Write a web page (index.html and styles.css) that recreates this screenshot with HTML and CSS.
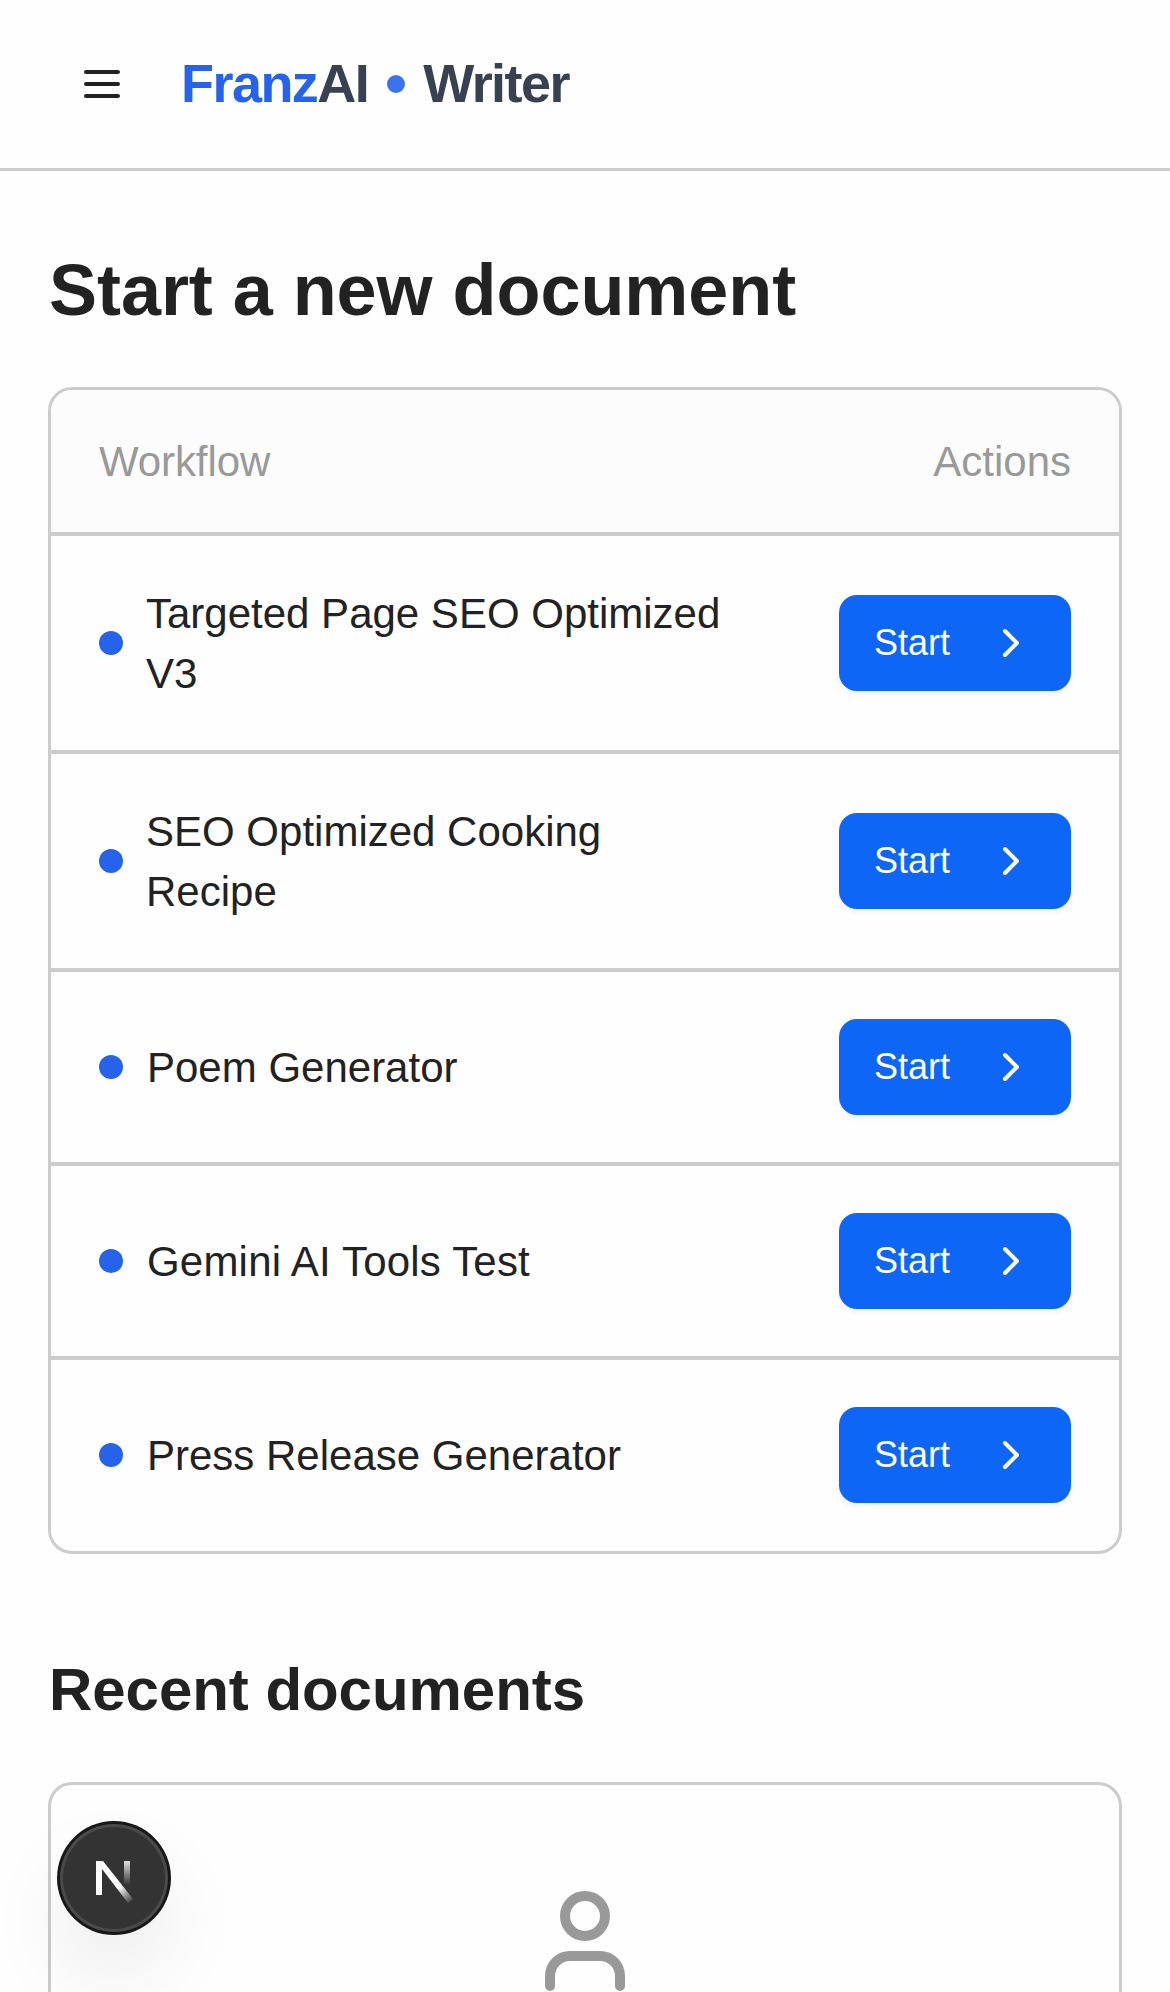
FILE: index.html
```html
<!DOCTYPE html>
<html lang="en">
<head>
<meta charset="utf-8">
<title>FranzAI Writer</title>
<link rel="stylesheet" href="styles.css">
</head>
<body>
<header class="header">
  <button class="menu" aria-label="Menu"><svg viewBox="0 0 36 28" width="36" height="28"><path d="M2 2h32M2 14h32M2 26h32"/></svg></button>
  <div class="brand"><span class="brand-name"><span class="brand-blue">Franz</span>AI</span><i class="brand-dot"></i><span class="brand-writer">Writer</span></div>
</header>
<main class="main">
  <h1 class="title">Start a new document</h1>
  <section class="table">
    <div class="thead"><span class="th-name">Workflow</span><span class="th-actions">Actions</span></div>
    <div class="row"><i class="dot"></i><span class="name name-long">Targeted Page SEO Optimized<br>V3</span><button class="start"><span class="start-label">Start</span><svg class="chevron" viewBox="0 0 24 24"><path d="m9 18 6-6-6-6"/></svg></button></div>
    <div class="row"><i class="dot"></i><span class="name name-long">SEO Optimized Cooking<br>Recipe</span><button class="start"><span class="start-label">Start</span><svg class="chevron" viewBox="0 0 24 24"><path d="m9 18 6-6-6-6"/></svg></button></div>
    <div class="row"><i class="dot"></i><span class="name">Poem Generator</span><button class="start"><span class="start-label">Start</span><svg class="chevron" viewBox="0 0 24 24"><path d="m9 18 6-6-6-6"/></svg></button></div>
    <div class="row"><i class="dot"></i><span class="name name-unkerned">Gemini AI Tools Test</span><button class="start"><span class="start-label">Start</span><svg class="chevron" viewBox="0 0 24 24"><path d="m9 18 6-6-6-6"/></svg></button></div>
    <div class="row"><i class="dot"></i><span class="name">Press Release Generator</span><button class="start"><span class="start-label">Start</span><svg class="chevron" viewBox="0 0 24 24"><path d="m9 18 6-6-6-6"/></svg></button></div>
  </section>
  <h2 class="subtitle">Recent documents</h2>
  <section class="recent">
    <svg class="user" viewBox="0 0 24 24"><circle cx="12" cy="7" r="4"/><path d="M19 21v-2a4 4 0 0 0-4-4H9a4 4 0 0 0-4 4v2"/></svg>
  </section>
</main>
<div class="badge">
  <svg viewBox="0 0 114 114" width="114" height="114">
    <defs>
      <linearGradient id="diag" gradientUnits="userSpaceOnUse" x1="63" y1="66" x2="75" y2="82"><stop stop-color="#fff"/><stop offset="1" stop-color="#fff" stop-opacity="0"/></linearGradient>
      <linearGradient id="stem" gradientUnits="userSpaceOnUse" x1="70" y1="36" x2="70" y2="64"><stop stop-color="#fff"/><stop offset="1" stop-color="#fff" stop-opacity="0"/></linearGradient>
    </defs>
    <circle cx="57" cy="57" r="57" fill="#171717"/>
    <circle cx="57" cy="57" r="54" fill="#4a4a4a"/>
    <circle cx="57" cy="57" r="51" fill="#333"/>
    <path d="M39 40h7l30 38-5 4-26-34v26h-6z" fill="url(#diag)"/>
    <path d="M67 40h6v25h-6z" fill="url(#stem)"/>
  </svg>
</div>
</body>
</html>
```
FILE: styles.css
```css
* { box-sizing: border-box; }
body {
  display: flex;
  flex-direction: column;
  margin: 0;
  height: 1992px;
  overflow: hidden;
  background: #fefefe;
  color: #222;
  font-family: "Liberation Sans", Arial, sans-serif;
}
button { border: 0; margin: 0; background: none; font: inherit; }
svg { display: block; }
.header {
  flex: none;
  display: flex;
  align-items: center;
  height: 171px;
  padding: 0 48px 0 84px;
  border-bottom: 3px solid #ccc;
}
.menu { padding: 0; margin-right: 61px; }
.menu path { fill: none; stroke: #222; stroke-width: 4; stroke-linecap: round; }
.brand {
  display: flex;
  align-items: center;
  font-size: 54px;
  line-height: 84px;
  font-weight: 700;
  letter-spacing: -1.55px;
  color: #374151;
}
.brand-name, .brand-writer { padding-bottom: 2px; }
.brand-blue { color: #2563eb; }
.brand-dot { width: 18px; height: 18px; margin: 0 18px 0 19px; border-radius: 50%; background: #3b73ed; }
.main {
  flex: 1;
  min-height: 0;
  display: flex;
  flex-direction: column;
  padding: 71px 48px 0;
}
.title { margin: 0 0 49px 1px; font-size: 72px; line-height: 96px; font-weight: 700; letter-spacing: -.05px; }
.table { flex: none; border: 3px solid #ccc; border-radius: 24px; overflow: hidden; }
.thead {
  display: flex;
  justify-content: space-between;
  height: 142px;
  padding: 1px 48px 0;
  background: #fcfcfc;
  color: #999;
  font-size: 42px;
  line-height: 142px;
}
.th-name { letter-spacing: -.1px; }
.row {
  display: flex;
  align-items: center;
  padding: 47px 48px;
  border-top: 4px solid #ccc;
  font-size: 42px;
  line-height: 60px;
}
.row:last-child { padding-bottom: 48px; }
.dot { flex: none; width: 24px; height: 24px; margin-right: 24px; border-radius: 50%; background: #2563eb; }
.name { flex: 1; padding-top: 2px; white-space: nowrap; }
.name-long { margin: 0 0 -1px -1px; padding-top: 1px; }
.name-unkerned { letter-spacing: .2px; }
.start {
  display: flex;
  align-items: center;
  justify-content: space-between;
  width: 232px;
  height: 96px;
  padding: 0 36px 0 35px;
  border-radius: 18px;
  background: #0d66f5;
  color: #fff;
  font-size: 36px;
  box-shadow: 0 3px 6px rgba(0, 0, 0, .05);
}
.chevron { width: 48px; height: 48px; fill: none; stroke: #fff; stroke-width: 2; stroke-linecap: round; stroke-linejoin: round; }
.subtitle { margin: 94px 0 50px 1px; font-size: 60px; line-height: 84px; font-weight: 700; letter-spacing: -.05px; }
.recent {
  flex: 1;
  min-height: 0;
  padding-top: 96px;
  border: 3px solid #ccc;
  border-bottom: 0;
  border-radius: 24px 24px 0 0;
  overflow: hidden;
}
.user { width: 120px; height: 120px; margin: 0 auto; fill: none; stroke: #999; stroke-width: 2; stroke-linecap: round; stroke-linejoin: round; }
.badge {
  position: absolute;
  left: 57px;
  top: 1821px;
  width: 114px;
  height: 114px;
  border-radius: 50%;
  box-shadow: 0 42px 84px -6px rgba(0, 0, 0, .09);
}
```
